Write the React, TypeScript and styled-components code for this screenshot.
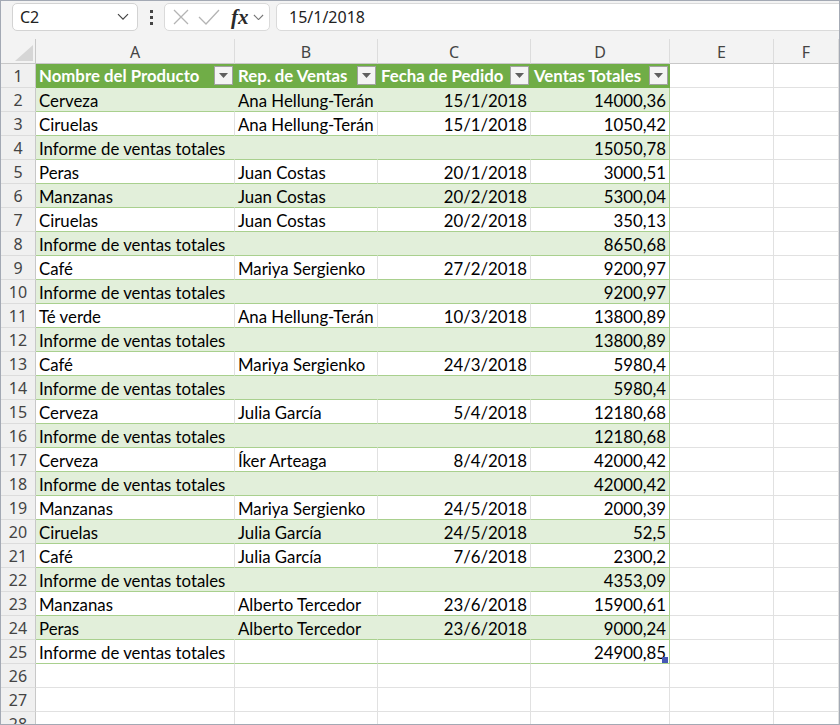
import React from 'react';
import styled, { createGlobalStyle, css } from 'styled-components';

const GlobalStyle = createGlobalStyle`
    html, body {
        margin: 0;
        padding: 0;
        background: #f3f3f3;
    }
    * {
        box-sizing: border-box;
    }
`;

const Frame = styled.div`
    width: 840px;
    height: 725px;
    display: flex;
    flex-direction: column;
    border: 1px solid #a3a9b4;
    background: #f3f3f3;
    overflow: hidden;
    font-family: 'Noto Sans', 'Open Sans', sans-serif;
`;

const Toolbar = styled.div`
    height: 38px;
    flex: none;
    display: flex;
    align-items: flex-start;
    padding: 2px 0 0 11px;
`;

const NameBox = styled.div`
    width: 126px;
    height: 28px;
    display: flex;
    align-items: center;
    justify-content: space-between;
    padding: 0 8px 0 7px;
    background: #fff;
    border: 1px solid #d3d3d3;
    border-radius: 5px;
    font-size: 16px;
    color: #222;
`;

const Dots = styled.div`
    width: 26px;
    height: 28px;
    display: flex;
    flex-direction: column;
    align-items: center;
    justify-content: center;
    gap: 3px;

    span {
        width: 3px;
        height: 3px;
        background: #444;
    }
`;

const FormulaButtons = styled.div`
    width: 106px;
    height: 28px;
    display: flex;
    align-items: center;
    padding: 0 0 0 8px;
    gap: 9px;
    background: #fff;
    border: 1px solid #dadada;
    border-radius: 5px;
`;

const Fx = styled.span`
    font-family: 'Liberation Serif', 'DejaVu Serif', serif;
    font-style: italic;
    font-weight: bold;
    font-size: 21px;
    color: #2a2a2a;
    margin-left: 2px;
    margin-right: -5px;
    line-height: 1;
`;

const FormulaInput = styled.div`
    flex: 1;
    height: 28px;
    margin-left: 6px;
    margin-right: -8px;
    display: flex;
    align-items: center;
    padding-left: 12px;
    background: #fff;
    border: 1px solid #dadada;
    border-radius: 5px;
    font-size: 16px;
    color: #222;
`;

const Sheet = styled.div`
    flex: 1;
    display: grid;
    grid-template-columns: 35px 199px 143px 153px 139px 104px 1fr;
    grid-template-rows: 25px repeat(28, 24px);
    overflow: hidden;
    background: #fff;
`;

const Corner = styled.div`
    background: #f3f3f3;
    border-right: 1px solid #c8c8c8;
    border-bottom: 1px solid #c8c8c8;
    display: flex;
    align-items: flex-end;
    justify-content: flex-end;
    padding: 0 2px 2px 0;
`;

const ColHeader = styled.div`
    background: #f3f3f3;
    border-right: 1px solid #dcdcdc;
    border-bottom: 1px solid #c8c8c8;
    display: flex;
    align-items: center;
    justify-content: center;
    font-size: 16px;
    color: #444;
    padding-top: 2px;
`;

const RowHeader = styled.div`
    background: #f0f0f0;
    border-right: 1px solid #c8c8c8;
    border-bottom: 1px solid #dcdcdc;
    display: flex;
    align-items: center;
    justify-content: center;
    font-size: 16px;
    color: #444;
`;

type Kind = 'header' | 'band' | 'plain' | 'empty';

const Cell = styled.div<{ $kind: Kind; $right?: boolean; $edge?: boolean }>`
    position: relative;
    display: flex;
    align-items: center;
    justify-content: ${(p) => (p.$right ? 'flex-end' : 'flex-start')};
    padding: 1px 3px 0 3px;
    white-space: nowrap;
    font-family: 'Lato', 'Liberation Sans', sans-serif;
    font-size: 16.8px;
    color: #000;
    border-right: 1px solid #e1e1e1;
    border-bottom: 1px solid #e1e1e1;

    ${(p) =>
        p.$kind === 'header' &&
        css`
            background: #70ad47;
            color: #fff;
            font-weight: bold;
            justify-content: space-between;
            padding: 0 1px 0 3px;
            border-right-color: #70ad47;
            border-bottom-color: #70ad47;
        `}
    ${(p) =>
        p.$kind === 'band' &&
        css`
            background: #e2efda;
            border-right-color: #e2efda;
            border-bottom-color: #a9d08e;
        `}
    ${(p) =>
        p.$kind === 'plain' &&
        css`
            border-bottom-color: #a9d08e;
        `}
    ${(p) =>
        p.$edge &&
        p.$kind !== 'header' &&
        css`
            border-right-color: #a9d08e;
        `}
`;

const FilterButton = styled.span`
    width: 19px;
    height: 19px;
    flex: none;
    display: flex;
    align-items: center;
    justify-content: center;
    background: #f4f4f4;
    border: 1px solid #a2a2a2;
`;

const FillHandle = styled.span`
    position: absolute;
    right: 1px;
    bottom: 0;
    width: 6px;
    height: 6px;
    background: #4557b5;
`;

const Chevron = ({ size = 12, color = '#444' }: { size?: number; color?: string }) => (
    <svg width={size} height={size * 0.6} viewBox="0 0 12 7" fill="none">
        <path d="M1 1 L6 6 L11 1" stroke={color} strokeWidth="1.2" />
    </svg>
);

const Triangle = () => (
    <svg width="9" height="5" viewBox="0 0 9 5">
        <path d="M0 0 H9 L4.5 5 Z" fill="#5f5f5f" />
    </svg>
);

const COLUMNS = ['A', 'B', 'C', 'D', 'E', 'F'];
const HEADERS = ['Nombre del Producto', 'Rep. de Ventas', 'Fecha de Pedido', 'Ventas Totales'];
const TOTAL = 'Informe de ventas totales';

const DATA: string[][] = [
    ['Cerveza', 'Ana Hellung-Terán', '15/1/2018', '14000,36'],
    ['Ciruelas', 'Ana Hellung-Terán', '15/1/2018', '1050,42'],
    [TOTAL, '', '', '15050,78'],
    ['Peras', 'Juan Costas', '20/1/2018', '3000,51'],
    ['Manzanas', 'Juan Costas', '20/2/2018', '5300,04'],
    ['Ciruelas', 'Juan Costas', '20/2/2018', '350,13'],
    [TOTAL, '', '', '8650,68'],
    ['Café', 'Mariya Sergienko', '27/2/2018', '9200,97'],
    [TOTAL, '', '', '9200,97'],
    ['Té verde', 'Ana Hellung-Terán', '10/3/2018', '13800,89'],
    [TOTAL, '', '', '13800,89'],
    ['Café', 'Mariya Sergienko', '24/3/2018', '5980,4'],
    [TOTAL, '', '', '5980,4'],
    ['Cerveza', 'Julia García', '5/4/2018', '12180,68'],
    [TOTAL, '', '', '12180,68'],
    ['Cerveza', 'Íker Arteaga', '8/4/2018', '42000,42'],
    [TOTAL, '', '', '42000,42'],
    ['Manzanas', 'Mariya Sergienko', '24/5/2018', '2000,39'],
    ['Ciruelas', 'Julia García', '24/5/2018', '52,5'],
    ['Café', 'Julia García', '7/6/2018', '2300,2'],
    [TOTAL, '', '', '4353,09'],
    ['Manzanas', 'Alberto Tercedor', '23/6/2018', '15900,61'],
    ['Peras', 'Alberto Tercedor', '23/6/2018', '9000,24'],
    [TOTAL, '', '', '24900,85'],
];

const ROW_COUNT = 28;

const App = () => {
    const rows = [];
    for (let r = 1; r <= ROW_COUNT; r++) {
        const cells = [<RowHeader key="h">{r}</RowHeader>];
        for (let c = 0; c < 6; c++) {
            if (c < 4 && r === 1) {
                cells.push(
                    <Cell key={c} $kind="header" $edge={c === 3}>
                        {HEADERS[c]}
                        <FilterButton>
                            <Triangle />
                        </FilterButton>
                    </Cell>
                );
            } else if (c < 4 && r <= 25) {
                const kind: Kind = r % 2 === 0 ? 'band' : 'plain';
                const value = DATA[r - 2][c];
                cells.push(
                    <Cell key={c} $kind={kind} $right={c >= 2} $edge={c === 3}>
                        {value}
                        {r === 25 && c === 3 && <FillHandle />}
                    </Cell>
                );
            } else {
                cells.push(<Cell key={c} $kind="empty" />);
            }
        }
        rows.push(<React.Fragment key={r}>{cells}</React.Fragment>);
    }

    return (
        <Frame>
            <GlobalStyle />
            <Toolbar>
                <NameBox>
                    C2
                    <Chevron />
                </NameBox>
                <Dots>
                    <span />
                    <span />
                    <span />
                </Dots>
                <FormulaButtons>
                    <svg width="16" height="16" viewBox="0 0 16 16" fill="none">
                        <path d="M1 1 L15 15 M15 1 L1 15" stroke="#b4b4b4" strokeWidth="1.3" />
                    </svg>
                    <svg width="22" height="16" viewBox="0 0 22 16" fill="none">
                        <path d="M1 8 L8 15 L21 1" stroke="#b4b4b4" strokeWidth="1.3" />
                    </svg>
                    <Fx>fx</Fx>
                    <Chevron size={11} color="#777" />
                </FormulaButtons>
                <FormulaInput>15/1/2018</FormulaInput>
            </Toolbar>
            <Sheet>
                <Corner>
                    <svg width="18" height="16" viewBox="0 0 18 16">
                        <path d="M18 0 V16 H0 Z" fill="#d6d6d6" />
                    </svg>
                </Corner>
                {COLUMNS.map((c) => (
                    <ColHeader key={c}>{c}</ColHeader>
                ))}
                {rows}
            </Sheet>
        </Frame>
    );
};

export default App;
